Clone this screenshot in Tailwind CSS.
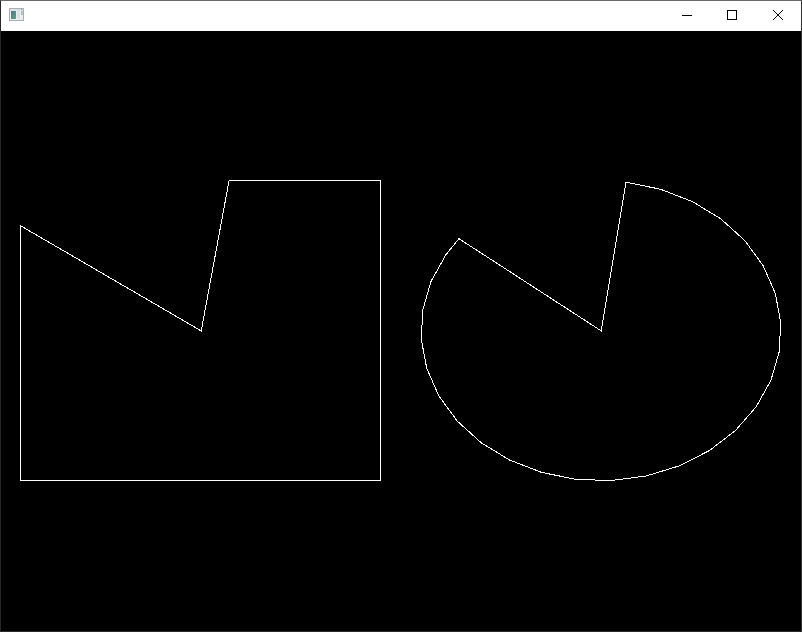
<!DOCTYPE html>
<html lang="en">
<head>
<meta charset="utf-8">
<title>Window</title>
<script src="https://cdn.jsdelivr.net/npm/@tailwindcss/browser@4"></script>
</head>
<body class="bg-black overflow-hidden">
<div class="flex h-[632px] w-[802px] flex-col border border-t-[#6b6b6b] border-r-[#343434] border-b-[#2b2b2b] border-l-[#262626] bg-black">
  <header class="flex h-[30px] shrink-0 items-start justify-between bg-white">
    <svg class="ml-2 mt-[7px] block" width="16" height="14" viewBox="0 0 16 14" shape-rendering="crispEdges">
      <defs><linearGradient id="g" x1="0" y1="0" x2="1" y2="1"><stop stop-color="#4379a0"/><stop offset="1" stop-color="#58a878"/></linearGradient></defs>
      <rect width="15" height="13" fill="#a9afb7"/>
      <rect x="1" y="1" width="13" height="2" fill="#dce1e5"/>
      <rect x="1" y="3" width="13" height="9" fill="#eceef0"/>
      <rect x="2" y="3" width="5" height="8" fill="url(#g)"/>
      <rect x="8" y="3" width="3" height="8" fill="#dfe2e4"/>
      <rect x="12" y="3" width="2" height="4" fill="#a9c6bd"/>
      <rect x="12" y="1" width="1" height="1" fill="#8499a7"/>
    </svg>
    <div class="flex h-[30px]">
      <svg class="block" width="46" height="30" viewBox="663 1 46 30"><path d="M682 15.5h10" stroke="#000" shape-rendering="crispEdges"/></svg>
      <svg class="block" width="46" height="30" viewBox="709 1 46 30"><rect x="727.5" y="10.5" width="9" height="9" fill="none" stroke="#000" shape-rendering="crispEdges"/></svg>
      <svg class="block" width="46" height="30" viewBox="755 1 46 30"><path d="M773 10l10 10M783 10l-10 10" stroke="#000" stroke-width="1"/></svg>
    </div>
  </header>
  <main class="h-[600px]">
    <svg class="block" width="800" height="600" viewBox="1 31 800 600" fill="none" stroke="#fff" stroke-width="1" shape-rendering="crispEdges">
      <path d="M201.2 330.9L229.1 180.5H380.5V480.5H20.5V225.7Z"/>
      <path id="pie"/>
    </svg>
  </main>
</div>
<script>
  // Elliptic pie outline, 32 segments per full turn, clockwise from 82 to -217.9 degrees
  const pts = [[601.2, 330.9]];
  const add = a => pts.push([601.0 + 180 * Math.cos(a * Math.PI / 180), 330.8 - 150 * Math.sin(a * Math.PI / 180)]);
  for (let a = 82; a > -217.9; a -= 11.25) add(a);
  add(-217.9);
  document.getElementById('pie').setAttribute('d', 'M' + pts.map(p => p.map(v => v.toFixed(2)).join(' ')).join('L') + 'Z');
</script>
</body>
</html>
